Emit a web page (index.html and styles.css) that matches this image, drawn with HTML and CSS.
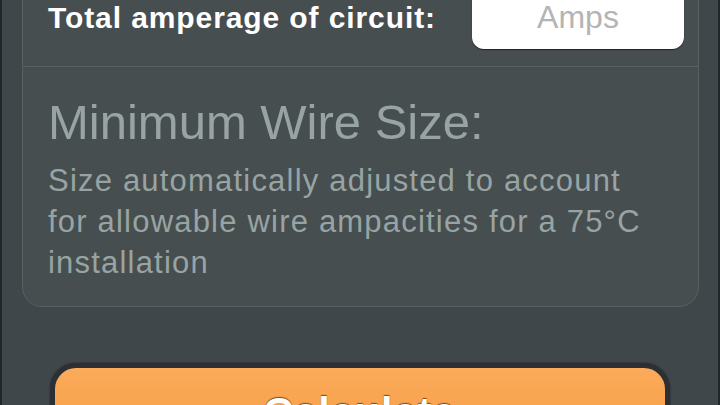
FILE: index.html
```html
<!DOCTYPE html>
<html lang="en">
<head>
    <meta charset="UTF-8">
    <meta name="viewport" content="width=device-width, initial-scale=1.0">
    <title>Wire Size Calculator</title>
    <link rel="stylesheet" href="styles.css">
</head>
<body>
    <div class="screen">
        <div class="card">
            <div class="input-row">
                <label class="input-label">Total amperage of circuit:</label>
                <div class="amps-box"><span class="placeholder">Amps</span></div>
            </div>
            <div class="result">
                <h2 class="result-title">Minimum Wire Size:</h2>
                <p class="result-note">Size automatically adjusted to account for allowable wire ampacities for a 75°C installation</p>
            </div>
        </div>
        <div class="calc-button">Calculate</div>
    </div>
</body>
</html>
```

FILE: styles.css
```css
html, body {
    margin: 0;
    padding: 0;
    height: 100%;
    overflow: hidden;
}
body {
    font-family: "Liberation Sans", Arial, sans-serif;
    background: #40474a;
    border-left: 2px solid #1f272b;
    border-right: 2px solid #1f272b;
    box-sizing: border-box;
}
.screen {
    padding: 0 19px 0 20px;
}
.card {
    margin-top: -30px;
    background: #474e50;
    border: 1.5px solid #586062;
    border-radius: 20px;
}
.input-row {
    display: flex;
    justify-content: space-between;
    align-items: flex-end;
    height: 96px;
    box-sizing: border-box;
    padding: 0 14px 17px 25px;
    border-bottom: 1.5px solid #596163;
}
.input-label {
    color: #fff;
    font-weight: bold;
    font-size: 30px;
    line-height: 34px;
    letter-spacing: 0.9px;
    margin-bottom: 14px;
}
.amps-box {
    width: 212px;
    height: 80px;
    background: #fff;
    border-radius: 0 0 12px 12px;
    box-shadow: 0 1px 1px rgba(0, 0, 0, 0.55);
    display: flex;
    justify-content: center;
    align-items: flex-end;
}
.placeholder {
    color: #b4b4b4;
    font-size: 32px;
    line-height: 36px;
    padding-bottom: 14px;
}
.result {
    padding: 27px 40px 23px 25px;
}
.result-title {
    margin: 0;
    font-weight: normal;
    font-size: 49px;
    line-height: 56px;
    color: #98a4a3;
}
.result-note {
    margin: 10px 0 0;
    font-size: 31px;
    line-height: 41px;
    letter-spacing: 1.2px;
    color: #98a4a3;
}
.calc-button {
    margin: 56px 29px 0 28px;
    height: 100px;
    border: 5px solid #2c3034;
    border-radius: 26px;
    box-shadow: 0 0 2px rgba(0, 0, 0, 0.6);
    background: linear-gradient(#fbab5a, #f59a40);
    padding-top: 20px;
    box-sizing: border-box;
    text-align: center;
    color: #fff;
    font-weight: bold;
    font-size: 41px;
    line-height: 48px;
    letter-spacing: 1.2px;
    text-shadow: 0 -1px 1px rgba(100, 55, 10, 0.85);
}
```
